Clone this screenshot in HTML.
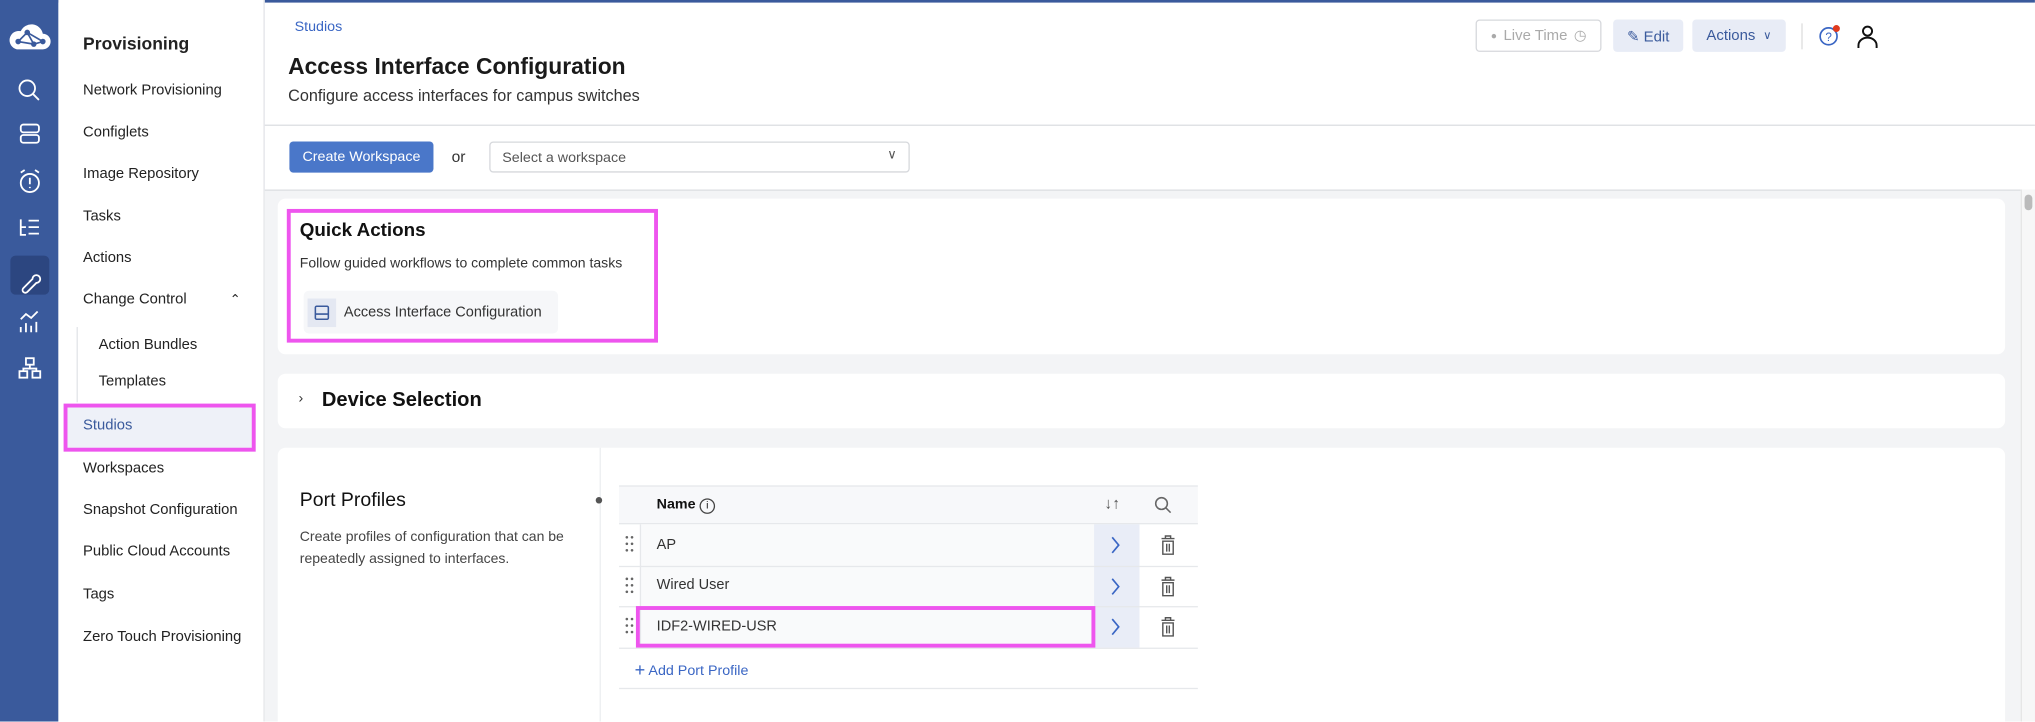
<!DOCTYPE html>
<html><head><meta charset="utf-8"><style>
*{box-sizing:border-box;margin:0;padding:0}
body{width:2035px;height:721px;overflow:hidden;background:#fff;font-family:"Liberation Sans",sans-serif;color:#222}
#s{width:1568px;height:556px;transform:scale(1.2978);transform-origin:0 0;position:relative;overflow:hidden}
.a{position:absolute;white-space:nowrap}
.rail{left:0;top:0;width:45px;height:556px;background:#3a5a9c}
.nav{left:45px;top:0;width:159px;height:556px;background:#fff;border-right:1px solid #e2e4e8}
.ni{left:64px;font-size:11.4px;color:#222}
.card{background:#fff;border-radius:6px}
.mag{border:3px solid #ee55ee}
.btn{border-radius:3px;font-size:11.5px;display:flex;align-items:center;justify-content:center}
</style></head><body><div id="s">
<div class="a" style="left:0;top:0;width:1568px;height:2px;background:#3a5a9c"></div>
<div class="a rail"></div>
<svg class="a" style="left:6px;top:16px" width="34" height="24" viewBox="0 0 34 24"><path d="M7 22h20a6 6 0 0 0 0-12 9 9 0 0 0-17-2 7 7 0 0 0-3 14z" fill="#fff"/><g stroke="#3a5a9c" stroke-width="1.3" fill="#3a5a9c"><path d="M8 16l7-7 5 9 7-2M15 9l12 7M8 16l12 2" fill="none"/><circle cx="15" cy="9" r="1.5"/><circle cx="8" cy="16" r="1.5"/><circle cx="20" cy="18" r="1.5"/><circle cx="27" cy="16" r="1.5"/></g></svg>
<div class="a" style="left:8px;top:197px;width:30px;height:30px;background:#2c4680;border-radius:4px"></div>
<svg class="a" style="left:12px;top:58px" width="22" height="250" viewBox="0 0 22 250" fill="none" stroke="#fff" stroke-width="1.4">
<circle cx="9" cy="10" r="6"/><path d="M13 14l5 5"/>
<rect x="4" y="38" width="14" height="6" rx="2"/><rect x="4" y="46" width="14" height="6" rx="2"/>
<circle cx="11" cy="83" r="7"/><path d="M11 79v5M11 86v1M4 75l3-2M18 75l-3-2"/>
<path d="M4 111v12h4M4 117h4M10 112h8M10 117h8M10 122h8"/>
<path d="M6 164l7-7a3 3 0 1 1 3 3l-7 7a2 2 0 0 1-3-3z"/>
<path d="M4 198v-4M8 198v-7M12 198v-5M16 198v-8M4 188l4-4 4 3 5-5"/>
<rect x="8" y="218" width="6" height="5"/><rect x="3" y="228" width="6" height="5"/><rect x="13" y="228" width="6" height="5"/><path d="M11 223v3M6 228v-2h10v2"/>
</svg>
<div class="a nav"></div>
<div class="a" style="left:64px;top:26px;font-size:13.5px;font-weight:bold">Provisioning</div>
<div class="a ni" style="top:64px">Network Provisioning</div>
<div class="a ni" style="top:96px">Configlets</div>
<div class="a ni" style="top:128px">Image Repository</div>
<div class="a ni" style="top:161px">Tasks</div>
<div class="a ni" style="top:193px">Actions</div>
<div class="a ni" style="top:225px">Change Control</div>
<div class="a" style="left:177px;top:226px;font-size:10px">&#8963;</div>
<div class="a" style="left:59px;top:252px;width:1px;height:58px;background:#e2e4e8"></div>
<div class="a ni" style="left:76px;top:260px">Action Bundles</div>
<div class="a ni" style="left:76px;top:288px">Templates</div>
<div class="a mag" style="left:49px;top:311px;width:148px;height:37px;background:#eef1f8"></div>
<div class="a ni" style="top:322px;color:#3a5a9c">Studios</div>
<div class="a ni" style="top:355px">Workspaces</div>
<div class="a ni" style="top:387px">Snapshot Configuration</div>
<div class="a ni" style="top:419px">Public Cloud Accounts</div>
<div class="a ni" style="top:452px">Tags</div>
<div class="a ni" style="top:485px">Zero Touch Provisioning</div>

<div class="a" style="left:204px;top:96px;width:1364px;height:1px;background:#dcdee2"></div>
<div class="a" style="left:227px;top:15px;font-size:11px;color:#3a66c4">Studios</div>
<div class="a" style="left:222px;top:41px;font-size:17.6px;font-weight:bold;color:#1a1a1a">Access Interface Configuration</div>
<div class="a" style="left:222px;top:67px;font-size:12.5px;color:#333">Configure access interfaces for campus switches</div>
<div class="a btn" style="left:1137px;top:15px;width:97px;height:25px;border:1px solid #d6d8dc;color:#aaa"><span style="font-size:8px;margin-right:5px">●</span>Live Time <span style="margin-left:5px;font-size:11px">&#9719;</span></div>
<div class="a btn" style="left:1243px;top:15px;width:54px;height:25px;background:#e8ecf6;color:#3a5a9c">&#9998; Edit</div>
<div class="a btn" style="left:1304px;top:15px;width:72px;height:25px;background:#e8ecf6;color:#3a5a9c">Actions <span style="margin-left:6px;font-size:9px">&#8744;</span></div>
<div class="a" style="left:1388px;top:18px;width:1px;height:20px;background:#ddd"></div>
<svg class="a" style="left:1400px;top:19px" width="20" height="18"><circle cx="9" cy="9" r="6.5" fill="none" stroke="#3a66c4" stroke-width="1.3"/><text x="9" y="12.5" font-size="9" text-anchor="middle" fill="#3a66c4" font-family="Liberation Sans">?</text><circle cx="15" cy="3" r="2.7" fill="#e03a1e"/></svg>
<svg class="a" style="left:1430px;top:19px" width="18" height="18" fill="none" stroke="#111" stroke-width="1.5"><circle cx="9" cy="5" r="3.5"/><path d="M2 18v-2a7 6 0 0 1 14 0v2"/></svg>

<div class="a btn" style="left:223px;top:109px;width:111px;height:24px;background:#4a77c9;color:#fff;font-size:11px">Create Workspace</div>
<div class="a" style="left:348px;top:114px;font-size:12px;color:#333">or</div>
<div class="a" style="left:377px;top:109px;width:324px;height:24px;border:1px solid #d6d8dc;border-radius:3px;font-size:11px;color:#555;padding:6px 9px">Select a workspace<span style="position:absolute;right:9px;top:4px;font-size:10px">&#8744;</span></div>

<div class="a" style="left:204px;top:146px;width:1364px;height:410px;background:#f3f4f6;border-top:1px solid #dcdee2"></div>
<div class="a" style="left:1557px;top:146px;width:11px;height:410px;background:#f7f7f7;border-left:1px solid #e5e5e5"></div>
<div class="a" style="left:1560px;top:150px;width:6px;height:12px;background:#bbb;border-radius:3px"></div>

<div class="a card" style="left:214px;top:153px;width:1331px;height:120px"></div>
<div class="a mag" style="left:221px;top:161px;width:286px;height:103px"></div>
<div class="a" style="left:231px;top:170px;font-size:14.5px;font-weight:bold;color:#111">Quick Actions</div>
<div class="a" style="left:231px;top:197px;font-size:10.8px;color:#333">Follow guided workflows to complete common tasks</div>
<div class="a" style="left:234px;top:224px;width:196px;height:33px;background:#f6f7f9;border-radius:4px"></div>
<div class="a" style="left:237px;top:230px;width:22px;height:22px;background:#e4e8f2"></div>
<svg class="a" style="left:242px;top:235px" width="12" height="12" fill="none" stroke="#3a5a9c" stroke-width="1.2"><rect x="1" y="1" width="10" height="10" rx="1"/><path d="M1 7h10"/></svg>
<div class="a" style="left:265px;top:235px;font-size:11.2px;color:#333">Access Interface Configuration</div>

<div class="a card" style="left:214px;top:288px;width:1331px;height:42px"></div>
<div class="a" style="left:230px;top:301px;font-size:11px;color:#333">&#8250;</div>
<div class="a" style="left:248px;top:300px;font-size:15.5px;font-weight:bold;color:#111">Device Selection</div>

<div class="a card" style="left:214px;top:345px;width:1331px;height:220px"></div>
<div class="a" style="left:462px;top:345px;width:1px;height:211px;background:#eceef1"></div>
<div class="a" style="left:459px;top:383px;width:5px;height:5px;border-radius:50%;background:#555"></div>
<div class="a" style="left:231px;top:377px;font-size:15px;color:#111">Port Profiles</div>
<div class="a" style="left:231px;top:406px;font-size:10.8px;color:#444;line-height:17px;white-space:normal;width:230px">Create profiles of configuration that can be repeatedly assigned to interfaces.</div>

<div class="a" style="left:477px;top:374px;width:446px;height:30px;background:#f7f8fa;border-top:1px solid #e6e8eb;border-bottom:1px solid #e6e8eb"></div>
<div class="a" style="left:506px;top:383px;font-size:11px;font-weight:bold;color:#111">Name <span style="display:inline-block;width:12px;height:12px;border:1px solid #444;border-radius:50%;font-size:8px;text-align:center;line-height:10px;font-weight:normal">i</span></div>
<div class="a" style="left:851px;top:381px;font-size:12px;color:#555">&#8595;&#8593;</div>
<svg class="a" style="left:889px;top:382px" width="14" height="14" fill="none" stroke="#666" stroke-width="1.2"><circle cx="6" cy="6" r="4.5"/><path d="M9.5 9.5l3.5 3.5"/></svg>

<div class="a" style="left:493px;top:404px;width:350px;height:95px;background:#f9fafb"></div>
<div class="a" style="left:843px;top:404px;width:35px;height:95px;background:#e9edf7"></div>
<div class="a" style="left:477px;top:436px;width:446px;height:1px;background:#e6e8eb"></div>
<div class="a" style="left:477px;top:467px;width:446px;height:1px;background:#e6e8eb"></div>
<div class="a" style="left:477px;top:499px;width:446px;height:1px;background:#e6e8eb"></div>
<div class="a" style="left:477px;top:530px;width:446px;height:1px;background:#e6e8eb"></div>
<div class="a" style="left:493px;top:404px;width:1px;height:95px;background:#e6e8eb"></div>
<div class="a" style="left:506px;top:414px;font-size:11.2px;color:#333">AP</div>
<div class="a" style="left:506px;top:445px;font-size:11.2px;color:#333">Wired User</div>
<div class="a" style="left:506px;top:477px;font-size:11.2px;color:#333">IDF2-WIRED-USR</div>
<div class="a mag" style="left:490px;top:467px;width:354px;height:32px"></div>
<svg class="a" style="left:480px;top:404px" width="12" height="95" fill="#666"><g><circle cx="3" cy="10" r="1"/><circle cx="7" cy="10" r="1"/><circle cx="3" cy="15" r="1"/><circle cx="7" cy="15" r="1"/><circle cx="3" cy="20" r="1"/><circle cx="7" cy="20" r="1"/></g><g transform="translate(0,32)"><circle cx="3" cy="10" r="1"/><circle cx="7" cy="10" r="1"/><circle cx="3" cy="15" r="1"/><circle cx="7" cy="15" r="1"/><circle cx="3" cy="20" r="1"/><circle cx="7" cy="20" r="1"/></g><g transform="translate(0,63)"><circle cx="3" cy="10" r="1"/><circle cx="7" cy="10" r="1"/><circle cx="3" cy="15" r="1"/><circle cx="7" cy="15" r="1"/><circle cx="3" cy="20" r="1"/><circle cx="7" cy="20" r="1"/></g></svg>
<svg class="a" style="left:854px;top:404px" width="60" height="95" fill="none" stroke-width="1.1">
<g stroke="#3a66c4" stroke-width="1.3"><path d="M3 10l5 6-5 6M3 42l5 6-5 6M3 73l5 6-5 6"/></g>
<g stroke="#555"><path d="M41 11h10M44 11v-2h4v2M42 13h8v10h-8zM45 15v6M47 15v6"/><g transform="translate(0,32)"><path d="M41 11h10M44 11v-2h4v2M42 13h8v10h-8zM45 15v6M47 15v6"/></g><g transform="translate(0,63)"><path d="M41 11h10M44 11v-2h4v2M42 13h8v10h-8zM45 15v6M47 15v6"/></g></g></svg>
<div class="a" style="left:489px;top:508px;font-size:11px;color:#3a66c4"><span style="font-size:14px;vertical-align:-1px">+</span> Add Port Profile</div>
</div></body></html>
